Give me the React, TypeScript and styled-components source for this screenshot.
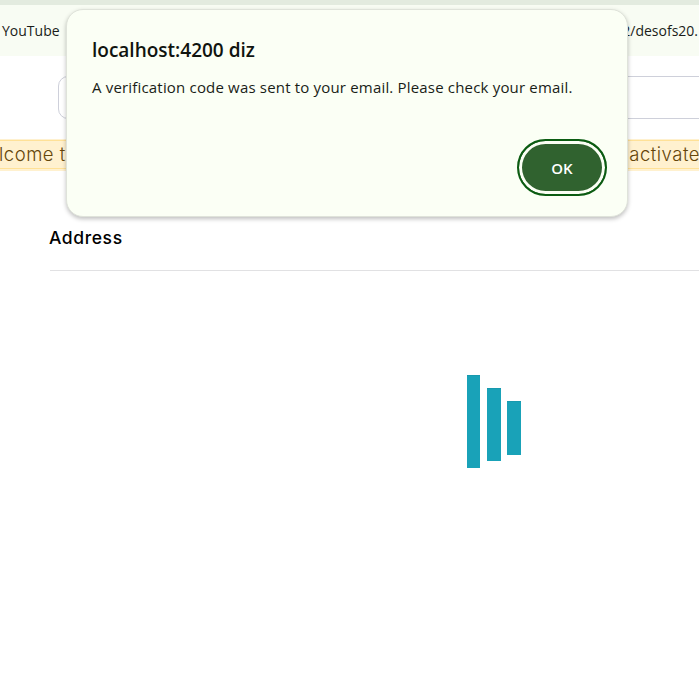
import React from "react";
import styled, { createGlobalStyle } from "styled-components";

const GlobalStyle = createGlobalStyle`
  *, *::before, *::after { box-sizing: border-box; }
  html, body { margin: 0; background: #fff; overflow: hidden; }
`;

const Page = styled.div`
  position: relative;
  width: 699px;
  height: 679px;
  overflow: hidden;
  background: #fff;
`;

const TabStrip = styled.div`
  height: 5px;
  background: #e3ebdf;
`;

const BookmarksBar = styled.div`
  display: flex;
  justify-content: space-between;
  height: 51px;
  padding: 15px 1px 0 2px;
  background: #f8fcf3;
`;

const Bookmark = styled.span`
  font: 400 14px/21px "Open Sans", "Noto Sans", sans-serif;
  color: #1a1c19;
  white-space: nowrap;
`;

const SearchInput = styled.div`
  height: 43px;
  margin: 20px -20px 0 58px;
  border: 1px solid #ced0da;
  border-radius: 10px;
`;

const Alert = styled.div`
  height: 32px;
  margin-top: 20px;
  padding: 1px 0 2px;
  background: #fff1cf;
`;

const AlertBody = styled.div`
  display: flex;
  justify-content: space-between;
  height: 29px;
  margin: 0 -1px;
  border: solid #ffe197;
  border-width: 1px 0;
`;

const AlertText = styled.span`
  font: 300 18.5px/26px Inter, sans-serif;
  letter-spacing: 0.5px;
  color: #65460a;
  white-space: nowrap;
`;

const Section = styled.section`
  margin: 55px 0 0 50px;
  height: 45px;
  border-bottom: 1px solid #e1e1e3;
`;

const SectionTitle = styled.h2`
  margin: 0 0 0 -1px;
  font: 500 17.5px/23px Inter, sans-serif;
  letter-spacing: 0.6px;
  color: #000;
`;

const Loader = styled.div`
  display: flex;
  align-items: flex-start;
  height: 95px;
  margin: 104px 0 0 467px;
`;

const Bar = styled.span<{ $width: number; $height: number; $drop: number; $gap: number }>`
  width: ${(p) => p.$width}px;
  height: ${(p) => p.$height}px;
  margin: ${(p) => p.$drop}px ${(p) => p.$gap}px 0 0;
  background: #19a2b8;
  border-top: 1px solid #1899ae;
`;

const Dialog = styled.div`
  position: absolute;
  left: 66px;
  top: 9px;
  width: 562px;
  height: 208px;
  display: flex;
  flex-direction: column;
  padding: 28px 20px 20px 26px;
  border: 1px solid #dfe3da;
  border-radius: 17px;
  background: #fbfff5;
  box-shadow: 0 2px 4px rgba(0, 0, 0, 0.25);
`;

const DialogTitle = styled.h1`
  margin: 0 0 0 -1px;
  font: 600 19px/25px "Open Sans", "Noto Sans", sans-serif;
  color: #10140f;
  white-space: nowrap;
`;

const DialogMessage = styled.p`
  margin: 13px 0 0 -1px;
  font: 400 15px/22px "Open Sans", "Noto Sans", sans-serif;
  letter-spacing: 0.18px;
  color: #191d17;
  white-space: nowrap;
`;

const OkButton = styled.button`
  align-self: flex-end;
  flex: none;
  width: 90px;
  height: 57px;
  margin-top: 41px;
  padding: 0;
  border: 2px solid #0b5c12;
  border-radius: 29px;
  background: #30622f;
  box-shadow: inset 0 0 0 3px #fbfff5;
  font: 600 15px/20px "Open Sans", "Noto Sans", sans-serif;
  color: #fff;
`;

const bars = [
  { width: 13, height: 93, drop: 0, gap: 7 },
  { width: 14, height: 73, drop: 13, gap: 6 },
  { width: 14, height: 54, drop: 26, gap: 0 },
];

export default function App() {
  return (
    <Page>
      <GlobalStyle />
      <TabStrip />
      <BookmarksBar>
        <Bookmark>YouTube</Bookmark>
        <Bookmark>2/desofs20.</Bookmark>
      </BookmarksBar>
      <SearchInput />
      <Alert role="alert">
        <AlertBody>
          <AlertText>lcome t</AlertText>
          <AlertText>activate</AlertText>
        </AlertBody>
      </Alert>
      <Section>
        <SectionTitle>Address</SectionTitle>
      </Section>
      <Loader>
        {bars.map((b) => (
          <Bar key={b.height} $width={b.width} $height={b.height} $drop={b.drop} $gap={b.gap} />
        ))}
      </Loader>
      <Dialog role="alertdialog">
        <DialogTitle>localhost:4200 diz</DialogTitle>
        <DialogMessage>
          A verification code was sent to your email. Please check your email.
        </DialogMessage>
        <OkButton>OK</OkButton>
      </Dialog>
    </Page>
  );
}
